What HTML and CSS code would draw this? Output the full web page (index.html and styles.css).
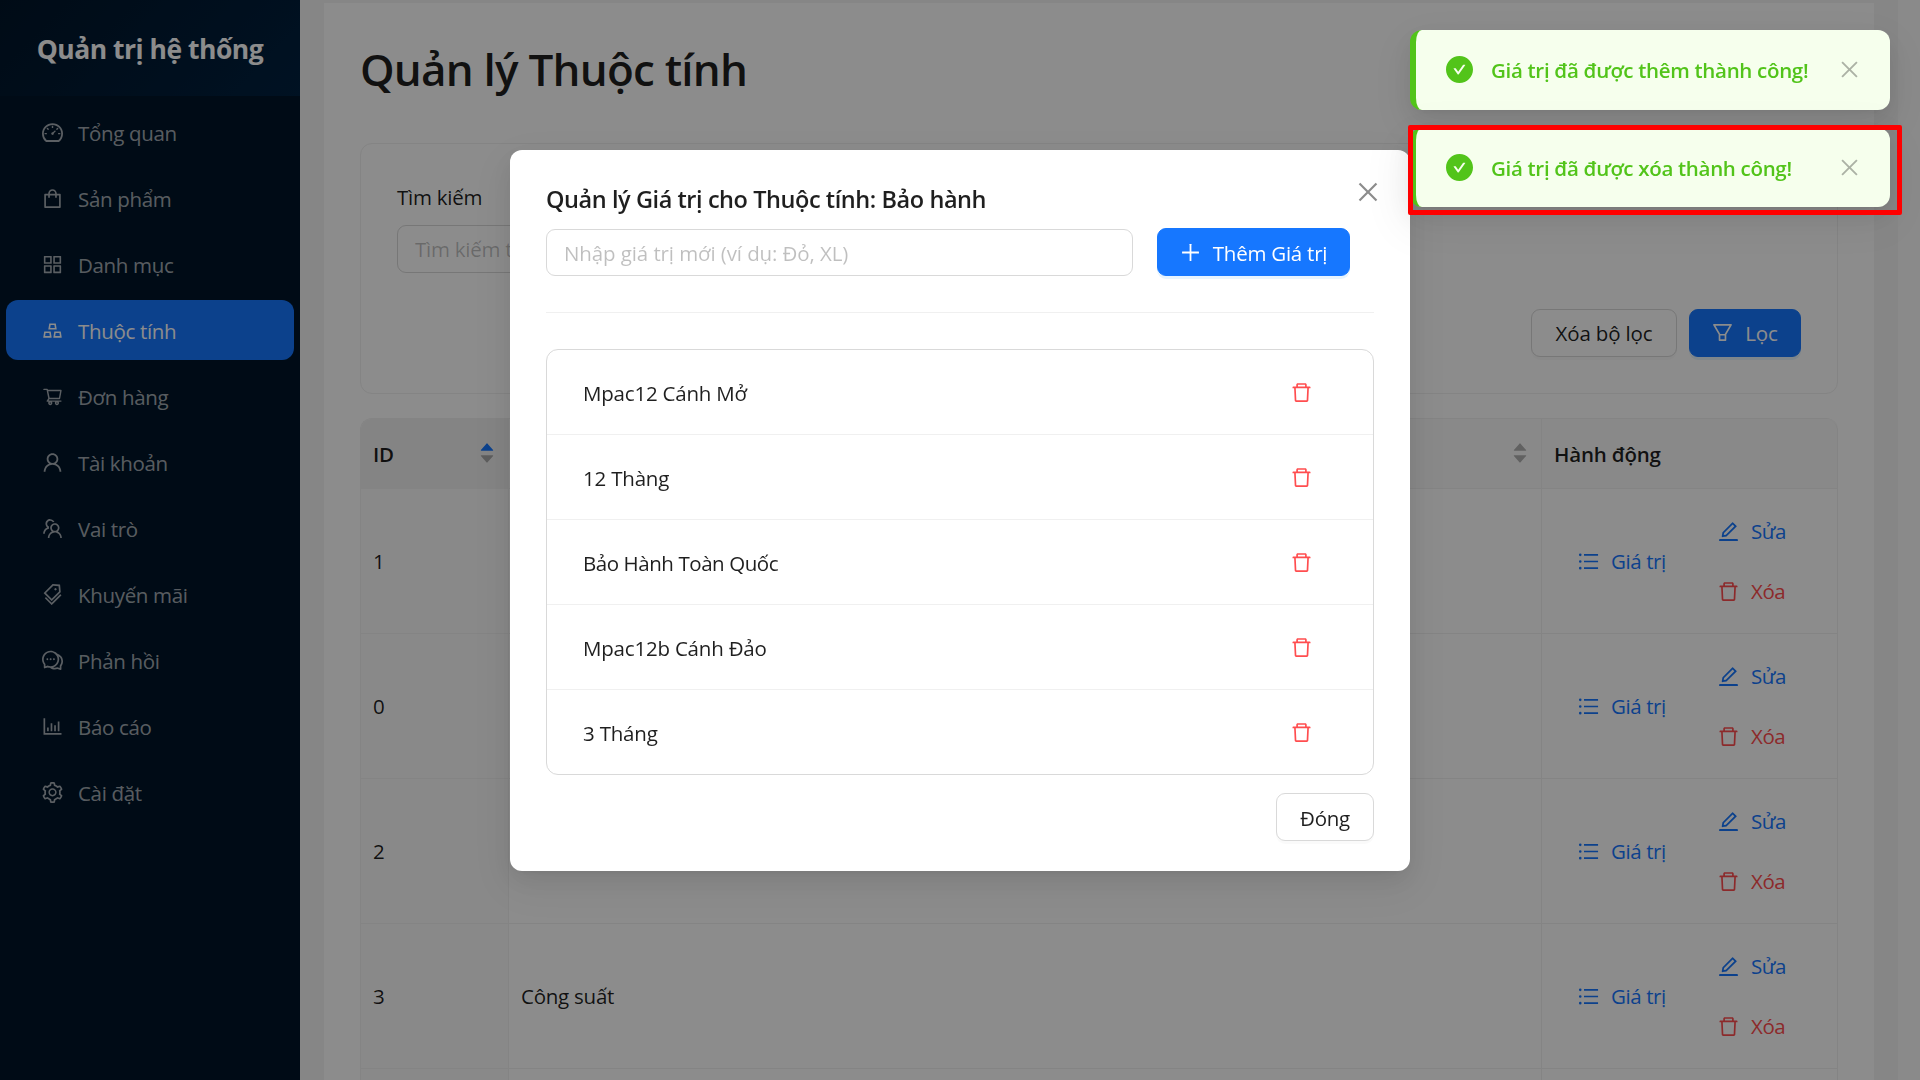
FILE: index.html
```html
<!DOCTYPE html>
<html lang="vi">
<head>
<meta charset="utf-8">
<title>Quản lý Thuộc tính</title>
<link rel="stylesheet" href="styles.css">
</head>
<body>
<svg class="sprite" aria-hidden="true">
  <symbol id="i-dashboard" viewBox="64 64 896 896"><path d="M924.8 385.6a446.7 446.7 0 00-96-142.4 446.7 446.7 0 00-142.4-96C631.1 123.8 572.5 112 512 112s-119.1 11.8-174.4 35.2a446.7 446.7 0 00-142.4 96 446.7 446.7 0 00-96 142.4C75.8 440.9 64 499.5 64 560c0 132.7 58.3 257.7 159.9 343.1l1.7 1.4c5.8 4.8 13.1 7.5 20.6 7.5h531.7c7.5 0 14.8-2.7 20.6-7.5l1.7-1.4C901.7 817.7 960 692.7 960 560c0-60.5-11.9-119.1-35.2-174.4zM761.4 836H262.6A371.12 371.12 0 01140 560c0-99.4 38.7-192.8 109-263 70.3-70.3 163.7-109 263-109 99.4 0 192.8 38.7 263 109 70.3 70.3 109 163.7 109 263 0 105.6-44.5 205.5-122.6 276zM623.5 421.5a8.03 8.03 0 00-11.3 0L527.7 506c-18.7-5-39.4-.2-54.1 14.5a55.95 55.95 0 000 79.2 55.95 55.95 0 0079.2 0 55.87 55.87 0 0014.5-54.1l84.5-84.5c3.1-3.1 3.1-8.2 0-11.3l-28.3-28.3zM490 320h44c4.4 0 8-3.6 8-8v-80c0-4.4-3.6-8-8-8h-44c-4.4 0-8 3.6-8 8v80c0 4.4 3.6 8 8 8zm260 218v44c0 4.4 3.6 8 8 8h80c4.4 0 8-3.6 8-8v-44c0-4.4-3.6-8-8-8h-80c-4.4 0-8 3.6-8 8zm12.7-197.2l-31.1-31.1a8.03 8.03 0 00-11.3 0l-56.6 56.6a8.03 8.03 0 000 11.3l31.1 31.1c3.1 3.1 8.2 3.1 11.3 0l56.6-56.6c3.1-3.1 3.1-8.2 0-11.3zm-458.6-31.1a8.03 8.03 0 00-11.3 0l-31.1 31.1a8.03 8.03 0 000 11.3l56.6 56.6c3.1 3.1 8.2 3.1 11.3 0l31.1-31.1c3.1-3.1 3.1-8.2 0-11.3l-56.6-56.6zM262 530h-80c-4.4 0-8 3.6-8 8v44c0 4.4 3.6 8 8 8h80c4.4 0 8-3.6 8-8v-44c0-4.4-3.6-8-8-8z"/></symbol>
  <symbol id="i-shopping" viewBox="64 64 896 896"><path d="M832 312H696v-16c0-101.6-82.4-184-184-184s-184 82.4-184 184v16H192c-17.7 0-32 14.3-32 32v536c0 17.7 14.3 32 32 32h640c17.7 0 32-14.3 32-32V344c0-17.7-14.3-32-32-32zm-432-16c0-61.9 50.1-112 112-112s112 50.1 112 112v16H400v-16zm392 544H232V384h96v88c0 4.4 3.6 8 8 8h56c4.4 0 8-3.6 8-8v-88h224v88c0 4.4 3.6 8 8 8h56c4.4 0 8-3.6 8-8v-88h96v456z"/></symbol>
  <symbol id="i-appstore" viewBox="64 64 896 896"><path fill-rule="evenodd" d="M160 144h304a16 16 0 0116 16v304a16 16 0 01-16 16H160a16 16 0 01-16-16V160a16 16 0 0116-16zm52 68v200h200V212zM560 144h304a16 16 0 0116 16v304a16 16 0 01-16 16H560a16 16 0 01-16-16V160a16 16 0 0116-16zm52 68v200h200V212zM160 544h304a16 16 0 0116 16v304a16 16 0 01-16 16H160a16 16 0 01-16-16V560a16 16 0 0116-16zm52 68v200h200V612zM560 544h304a16 16 0 0116 16v304a16 16 0 01-16 16H560a16 16 0 01-16-16V560a16 16 0 0116-16zm52 68v200h200V612z"/></symbol>
  <symbol id="i-gold" viewBox="64 64 896 896"><path d="M342 472h342c.4 0 .9 0 1.3-.1 4.4-.7 7.3-4.8 6.6-9.2l-40.2-248c-.6-3.9-4-6.7-7.9-6.7H382.2c-3.9 0-7.3 2.8-7.9 6.7l-40.2 248c-.1.4-.1.9-.1 1.3 0 4.4 3.6 8 8 8zm91.2-196h159.5l20.7 128h-201l20.8-128zm2.5 282.7c-.6-3.9-4-6.7-7.9-6.7H166.2c-3.9 0-7.3 2.8-7.9 6.7l-40.2 248c-.1.4-.1.9-.1 1.3 0 4.4 3.6 8 8 8h342c.4 0 .9 0 1.3-.1 4.4-.7 7.3-4.8 6.6-9.2l-40.2-248zM196.5 748l20.7-128h159.5l20.7 128H196.5zm709.4 58.7l-40.2-248c-.6-3.9-4-6.7-7.9-6.7H596.2c-3.9 0-7.3 2.8-7.9 6.7l-40.2 248c-.1.4-.1.9-.1 1.3 0 4.4 3.6 8 8 8h342c.4 0 .9 0 1.3-.1 4.3-.7 7.3-4.8 6.6-9.2zM626.5 748l20.7-128h159.5l20.7 128H626.5z"/></symbol>
  <symbol id="i-cart" viewBox="0 0 1024 1024"><path d="M922.9 701.9H327.4l29.9-60.9 496.8-.9c16.8 0 31.2-12 34.2-28.6l68.8-385.1c1.8-10.1-.9-20.5-7.5-28.4a34.99 34.99 0 00-26.6-12.5l-632-2.1-5.4-25.4c-3.4-16.2-18-28-34.6-28H96.5a35.3 35.3 0 100 70.6h125.9L246 312.8l58.1 281.3-74.8 122.1a34.96 34.96 0 00-3 36.8c6 11.9 18.1 19.4 31.5 19.4h62.8a102.43 102.43 0 00-20.6 61.7c0 56.6 46 102.6 102.6 102.6s102.6-46 102.6-102.6c0-22.3-7.4-44-20.6-61.7h161.1a102.43 102.43 0 00-20.6 61.7c0 56.6 46 102.6 102.6 102.6s102.6-46 102.6-102.6c0-22.3-7.4-44-20.6-61.7H923c19.4 0 35.3-15.8 35.3-35.3a35.42 35.42 0 00-35.4-35.2zM305.7 253l575.8 1.9-56.4 315.8-452.3.8L305.7 253zm96.9 612.7c-17.4 0-31.6-14.2-31.6-31.6 0-17.4 14.2-31.6 31.6-31.6s31.6 14.2 31.6 31.6a31.6 31.6 0 01-31.6 31.6zm325.1 0c-17.4 0-31.6-14.2-31.6-31.6 0-17.4 14.2-31.6 31.6-31.6s31.6 14.2 31.6 31.6a31.6 31.6 0 01-31.6 31.6z"/></symbol>
  <symbol id="i-user" viewBox="64 64 896 896"><path d="M858.5 763.6a374 374 0 00-80.6-119.5 375.63 375.63 0 00-119.5-80.6c-.4-.2-.8-.3-1.2-.5C719.5 518 760 444.7 760 362c0-137-111-248-248-248S264 225 264 362c0 82.7 40.5 156 102.8 201.1-.4.2-.8.3-1.2.5-44.8 18.9-85 46-119.5 80.6a375.63 375.63 0 00-80.6 119.5A371.7 371.7 0 00136 901.8a8 8 0 008 8.2h60c4.4 0 7.9-3.5 8-7.8 2-77.2 33-149.5 87.8-204.3 56.7-56.7 132-87.9 212.2-87.9s155.5 31.2 212.2 87.9C779 752.7 810 825 812 902.2c.1 4.4 3.6 7.8 8 7.8h60a8 8 0 008-8.2c-1-47.8-10.9-94.3-29.5-138.2zM512 534c-45.9 0-89.1-17.9-121.6-50.4S340 407.9 340 362c0-45.9 17.9-89.1 50.4-121.6S466.1 190 512 190s89.1 17.9 121.6 50.4S684 316.1 684 362c0 45.9-17.9 89.1-50.4 121.6S557.9 534 512 534z"/></symbol>
  <symbol id="i-team" viewBox="64 64 896 896"><path d="M824.2 699.9a301.55 301.55 0 00-86.4-60.4C783.1 602.8 812 546.8 812 484c0-110.8-92.4-201.7-203.2-200-109.1 1.7-197 90.6-197 200 0 62.8 29 118.8 74.2 155.5a300.95 300.95 0 00-86.4 60.4C345 754.6 314 826.8 312 903.8a8 8 0 008 8.2h56c4.3 0 7.9-3.4 8-7.7 1.9-58 25.4-112.3 66.7-153.5A226.62 226.62 0 01612 684c60.9 0 118.2 23.7 161.3 66.8C814.6 792 838 846.3 840 904.3c.1 4.3 3.7 7.7 8 7.7h56a8 8 0 008-8.2c-2-77-33-149.2-87.8-203.9zM612 612c-34.2 0-66.4-13.3-90.5-37.5a126.86 126.86 0 01-37.5-91.8c.3-32.8 13.4-64.5 36.3-88 24-24.6 56.1-38.3 90.4-38.7 33.9-.3 66.8 12.9 91 36.6 24.8 24.3 38.4 56.8 38.4 91.4 0 34.2-13.3 66.3-37.5 90.5A127.3 127.3 0 01612 612zM361.5 510.4c-.9-8.7-1.4-17.5-1.4-26.4 0-15.9 1.5-31.4 4.3-46.5.7-3.6-1.2-7.3-4.5-8.8-13.6-6.1-26.1-14.5-36.9-25.1a127.54 127.54 0 01-38.7-95.4c.9-32.1 13.8-62.6 36.3-85.6 24.7-25.3 57.9-39.1 93.2-38.7 31.9.3 62.7 12.6 86 34.4 7.9 7.4 14.7 15.6 20.4 24.4 2 3.1 5.9 4.4 9.3 3.2 17.6-6.1 36.2-10.4 55.3-12.4 5.6-.6 8.8-6.6 6.3-11.6-32.5-64.3-98.9-108.7-175.7-109.9-110.9-1.7-203.3 89.2-203.3 199.9 0 62.8 28.9 118.8 74.2 155.5-31.8 14.7-61.1 35-86.5 60.4-54.8 54.7-85.8 126.9-87.8 204a8 8 0 008 8.2h56.1c4.3 0 7.9-3.4 8-7.7 1.9-58 25.4-112.3 66.7-153.5 29.4-29.4 65.4-49.8 104.7-59.7 3.9-1 6.5-4.7 6-8.7z"/></symbol>
  <symbol id="i-tags" viewBox="64 64 896 896"><path d="M483.2 790.3L861.4 412c1.7-1.7 2.5-4 2.3-6.3l-25.5-301.4c-.7-7.8-6.8-13.9-14.6-14.6L522.2 64.3c-2.3-.2-4.7.6-6.3 2.3L137.7 444.8a8.03 8.03 0 000 11.3l334.2 334.2c3.1 3.2 8.2 3.2 11.3 0zm62.6-651.7l224.6 19 19 224.6L477.5 694 233.9 450.5l311.9-311.9zm60.16 186.23a48 48 0 1067.88-67.89 48 48 0 10-67.88 67.89zM889.7 539.8l-39.6-39.5a8.03 8.03 0 00-11.3 0l-362 361.3-237.6-237a8.03 8.03 0 00-11.3 0l-39.6 39.5a8.03 8.03 0 000 11.3l243.2 242.8 39.6 39.5c3.1 3.1 8.2 3.1 11.3 0l407.3-406.6c3.1-3.1 3.1-8.2 0-11.3z"/></symbol>
  <symbol id="i-comment" viewBox="64 64 896 896"><path d="M573 421c-23.1 0-41 17.9-41 40s17.9 40 41 40c21.1 0 39-17.9 39-40s-17.9-40-39-40zm-280 0c-23.1 0-41 17.9-41 40s17.9 40 41 40c21.1 0 39-17.9 39-40s-17.9-40-39-40z"/><path d="M894 345a343.92 343.92 0 00-189-130v.1c-17.1-19-36.4-36.5-58-52.1-163.7-119-393.5-82.7-513 81-96.3 133-92.2 311.9 6 439l.8 132.6c0 3.2.5 6.4 1.5 9.4a31.95 31.95 0 0040.1 20.9L309 806c33.5 11.9 68.1 18.7 102.5 20.6l-.5.4c89.1 64.9 205.9 84.4 313 49l127.1 41.4c3.2 1 6.5 1.6 9.9 1.6 17.7 0 32-14.3 32-32V753c88.1-119.6 90.4-284.9 1-408zM323 735l-12-5-99 31-1-104-8-9c-84.6-103.2-90.2-251.9-11-361 96.4-132.2 281.2-161.4 413-66 132.2 96.1 161.5 280.6 66 412-80.1 109.9-223.5 150.5-348 102zm505-17l-8 10 1 104-98-33-12 5c-56 20.8-115.7 22.5-171 7l-.2-.1A367.31 367.31 0 00729 676c76.4-105.3 88.8-237.6 44.4-350.4l.6.4c23 16.5 44.1 37.1 62 62 72.6 99.6 68.5 235.2-8 330z"/><path d="M433 421c-23.1 0-41 17.9-41 40s17.9 40 41 40c21.1 0 39-17.9 39-40s-17.9-40-39-40z"/></symbol>
  <symbol id="i-chart" viewBox="64 64 896 896"><path d="M888 792H200V168c0-4.4-3.6-8-8-8h-56c-4.4 0-8 3.6-8 8v688c0 4.4 3.6 8 8 8h752c4.4 0 8-3.6 8-8v-56c0-4.4-3.6-8-8-8zm-600-80h56c4.4 0 8-3.6 8-8V560c0-4.4-3.6-8-8-8h-56c-4.4 0-8 3.6-8 8v144c0 4.4 3.6 8 8 8zm152 0h56c4.4 0 8-3.6 8-8V384c0-4.4-3.6-8-8-8h-56c-4.4 0-8 3.6-8 8v320c0 4.4 3.6 8 8 8zm152 0h56c4.4 0 8-3.6 8-8V462c0-4.4-3.6-8-8-8h-56c-4.4 0-8 3.6-8 8v242c0 4.4 3.6 8 8 8zm152 0h56c4.4 0 8-3.6 8-8V304c0-4.4-3.6-8-8-8h-56c-4.4 0-8 3.6-8 8v400c0 4.4 3.6 8 8 8z"/></symbol>
  <symbol id="i-setting" viewBox="64 64 896 896"><path d="M924.8 625.7l-65.5-56c3.1-19 4.7-38.4 4.7-57.8s-1.6-38.8-4.7-57.8l65.5-56a32.03 32.03 0 009.3-35.2l-.9-2.6a443.74 443.74 0 00-79.7-137.9l-1.8-2.1a32.12 32.12 0 00-35.1-9.5l-81.3 28.9c-30-24.6-63.5-44-99.7-57.6l-15.7-85a32.05 32.05 0 00-25.8-25.7l-2.7-.5c-52.1-9.4-106.9-9.4-159 0l-2.7.5a32.05 32.05 0 00-25.8 25.7l-15.8 85.4a351.86 351.86 0 00-99 57.4l-81.9-29.1a32 32 0 00-35.1 9.5l-1.8 2.1a446.02 446.02 0 00-79.7 137.9l-.9 2.6c-4.5 12.5-.8 26.5 9.3 35.2l66.3 56.6c-3.1 18.8-4.6 38-4.6 57.1 0 19.2 1.5 38.4 4.6 57.1L99 625.5a32.03 32.03 0 00-9.3 35.2l.9 2.6c18.1 50.4 44.9 96.9 79.7 137.9l1.8 2.1a32.12 32.12 0 0035.1 9.5l81.9-29.1c29.8 24.5 63.1 43.9 99 57.4l15.8 85.4a32.05 32.05 0 0025.8 25.7l2.7.5a449.4 449.4 0 00159 0l2.7-.5a32.05 32.05 0 0025.8-25.7l15.7-85a350 350 0 0099.7-57.6l81.3 28.9a32 32 0 0035.1-9.5l1.8-2.1c34.8-41.1 61.6-87.5 79.7-137.9l.9-2.6c4.5-12.3.8-26.3-9.3-35zM788.3 465.9c2.5 15.1 3.8 30.6 3.8 46.1s-1.3 31-3.8 46.1l-6.6 40.1 74.7 63.9a370.03 370.03 0 01-42.6 73.6L721 702.8l-31.4 25.8c-23.9 19.6-50.5 35-79.3 45.8l-38.1 14.3-17.9 97a377.5 377.5 0 01-85 0l-17.9-97.2-37.8-14.5c-28.5-10.8-55-26.2-78.7-45.7l-31.4-25.9-93.4 33.2c-17-22.9-31.2-47.6-42.6-73.6l75.5-64.5-6.5-40c-2.4-14.9-3.7-30.3-3.7-45.5 0-15.3 1.2-30.6 3.7-45.5l6.5-40-75.5-64.5c11.3-26.1 25.6-50.7 42.6-73.6l93.4 33.2 31.4-25.9c23.7-19.5 50.2-34.9 78.7-45.7l37.9-14.3 17.9-97.2c28.1-3.2 56.8-3.2 85 0l17.9 97 38.1 14.3c28.7 10.8 55.4 26.2 79.3 45.8l31.4 25.8 92.8-32.9c17 22.9 31.2 47.6 42.6 73.6L781.8 426l6.5 39.9zM512 326c-97.2 0-176 78.8-176 176s78.8 176 176 176 176-78.8 176-176-78.8-176-176-176zm79.2 255.2A111.6 111.6 0 01512 614c-29.9 0-58-11.7-79.2-32.8A111.6 111.6 0 01400 502c0-29.9 11.7-58 32.8-79.2C454 401.6 482.1 390 512 390c29.9 0 58 11.6 79.2 32.8A111.6 111.6 0 01624 502c0 29.9-11.7 58-32.8 79.2z"/></symbol>
  <symbol id="i-delete" viewBox="64 64 896 896"><path d="M360 184h-8c4.4 0 8-3.6 8-8v8h304v-8c0 4.4 3.6 8 8 8h-8v72h72v-80c0-35.3-28.7-64-64-64H352c-35.3 0-64 28.7-64 64v80h72v-72zm504 72H160c-17.7 0-32 14.3-32 32v32c0 4.4 3.6 8 8 8h60.4l24.7 523c1.6 34.1 29.8 61 63.9 61h454c34.2 0 62.3-26.8 63.9-61l24.7-523H888c4.4 0 8-3.6 8-8v-32c0-17.7-14.3-32-32-32zM731.3 840H292.7l-24.2-512h487l-24.2 512z"/></symbol>
  <symbol id="i-edit" viewBox="64 64 896 896"><path d="M257.7 752c2 0 4-.2 6-.5L431.9 722c2-.4 3.9-1.3 5.3-2.8l423.9-423.9a9.96 9.96 0 000-14.1L694.9 114.9c-1.9-1.9-4.4-2.9-7.1-2.9s-5.2 1-7.1 2.9L256.8 538.8c-1.5 1.5-2.4 3.3-2.8 5.3l-29.5 168.2a33.5 33.5 0 009.4 29.8c6.6 6.4 14.9 9.9 23.8 9.9zm67.4-174.4L687.8 215l73.3 73.3-362.7 362.6-88.9 15.7 15.6-89zM880 836H144c-17.7 0-32 14.3-32 32v36c0 4.4 3.6 8 8 8h784c4.4 0 8-3.6 8-8v-36c0-17.7-14.3-32-32-32z"/></symbol>
  <symbol id="i-list" viewBox="64 64 896 896"><path d="M912 192H328c-4.4 0-8 3.6-8 8v56c0 4.4 3.6 8 8 8h584c4.4 0 8-3.6 8-8v-56c0-4.4-3.6-8-8-8zm0 284H328c-4.4 0-8 3.6-8 8v56c0 4.4 3.6 8 8 8h584c4.4 0 8-3.6 8-8v-56c0-4.4-3.6-8-8-8zm0 284H328c-4.4 0-8 3.6-8 8v56c0 4.4 3.6 8 8 8h584c4.4 0 8-3.6 8-8v-56c0-4.4-3.6-8-8-8zM104 228a56 56 0 10112 0 56 56 0 10-112 0zm0 284a56 56 0 10112 0 56 56 0 10-112 0zm0 284a56 56 0 10112 0 56 56 0 10-112 0z"/></symbol>
  <symbol id="i-filter" viewBox="64 64 896 896"><path d="M880.1 154H143.9c-24.5 0-39.8 26.7-27.5 48L349 597.4V838c0 17.7 14.2 32 31.8 32h262.4c17.6 0 31.8-14.3 31.8-32V597.4L907.7 202c12.2-21.3-3.1-48-27.6-48zM603.4 798H420.6V642h182.9v156zm9.6-236.6l-9.5 16.6h-183l-9.5-16.6L212.7 226h598.6L613 561.4z"/></symbol>
  <symbol id="i-plus" viewBox="64 64 896 896"><path d="M482 152h60q8 0 8 8v704q0 8-8 8h-60q-8 0-8-8V160q0-8 8-8z"/><path d="M192 474h672q8 0 8 8v60q0 8-8 8H160q-8 0-8-8v-60q0-8 8-8z"/></symbol>
  <symbol id="i-close" viewBox="64 64 896 896"><path d="M799.9 166.3l57.9 57.9L569.9 512l287.9 287.8-57.9 57.9L512 569.9 224.2 857.7l-57.9-57.9L454.1 512 166.3 224.2l57.9-57.9L512 454.1z"/></symbol>
  <symbol id="i-check" viewBox="64 64 896 896"><path d="M512 64C264.6 64 64 264.6 64 512s200.6 448 448 448 448-200.6 448-448S759.4 64 512 64zm193.5 301.7l-210.6 292a31.8 31.8 0 01-51.7 0L318.5 484.9c-3.8-5.3 0-12.7 6.5-12.7h46.9c10.2 0 19.9 4.9 25.9 13.3l71.2 98.8 157.2-218c6-8.3 15.6-13.3 25.9-13.3H699c6.5 0 10.3 7.4 6.5 12.7z"/></symbol>
  <symbol id="i-up" viewBox="0 0 1024 1024"><path d="M858.9 689L530.5 308.2c-9.4-10.9-27.5-10.9-37 0L165.1 689c-12.2 14.2-1.2 35 18.5 35h656.8c19.7 0 30.7-20.8 18.5-35z"/></symbol>
  <symbol id="i-down" viewBox="0 0 1024 1024"><path d="M840.4 300H183.6c-19.7 0-30.7 20.8-18.5 35l328.4 380.8c9.4 10.9 27.4 10.9 37 0L858.9 335c12.2-14.2 1.2-35-18.5-35z"/></symbol>
</svg>

<div class="layout">
  <aside class="sidebar">
    <div class="brand">Quản trị hệ thống</div>
    <nav class="menu">
      <a class="item"><svg class="icon"><use href="#i-dashboard"/></svg><span>Tổng quan</span></a>
      <a class="item"><svg class="icon"><use href="#i-shopping"/></svg><span>Sản phẩm</span></a>
      <a class="item"><svg class="icon"><use href="#i-appstore"/></svg><span>Danh mục</span></a>
      <a class="item active"><svg class="icon"><use href="#i-gold"/></svg><span>Thuộc tính</span></a>
      <a class="item"><svg class="icon"><use href="#i-cart"/></svg><span>Đơn hàng</span></a>
      <a class="item"><svg class="icon"><use href="#i-user"/></svg><span>Tài khoản</span></a>
      <a class="item"><svg class="icon"><use href="#i-team"/></svg><span>Vai trò</span></a>
      <a class="item"><svg class="icon"><use href="#i-tags"/></svg><span>Khuyến mãi</span></a>
      <a class="item"><svg class="icon"><use href="#i-comment"/></svg><span>Phản hồi</span></a>
      <a class="item"><svg class="icon"><use href="#i-chart"/></svg><span>Báo cáo</span></a>
      <a class="item"><svg class="icon"><use href="#i-setting"/></svg><span>Cài đặt</span></a>
    </nav>
  </aside>

  <main class="page">
    <div class="content">
      <h1 class="page-title">Quản lý Thuộc tính</h1>

      <section class="filter">
        <label class="filter-label">Tìm kiếm</label>
        <div class="input filter-input">Tìm kiếm t</div>
        <div class="filter-actions">
          <button class="btn">Xóa bộ lọc</button>
          <button class="btn primary btn-filter"><svg class="icon"><use href="#i-filter"/></svg><span>Lọc</span></button>
        </div>
      </section>

      <div class="table">
        <div class="tr head">
          <div class="td sorted"><span>ID</span><span class="sorter"><svg class="on"><use href="#i-up"/></svg><svg><use href="#i-down"/></svg></span></div>
          <div class="td"><span></span><span class="sorter"><svg><use href="#i-up"/></svg><svg><use href="#i-down"/></svg></span></div>
          <div class="td"><span>Hành động</span></div>
        </div>
        <div class="tr">
          <div class="td sorted">1</div><div class="td"></div>
          <div class="td actions"><a class="link"><svg class="icon"><use href="#i-list"/></svg><span>Giá trị</span></a><div class="stack"><a class="link"><svg class="icon"><use href="#i-edit"/></svg><span>Sửa</span></a><a class="link danger"><svg class="icon"><use href="#i-delete"/></svg><span>Xóa</span></a></div></div>
        </div>
        <div class="tr">
          <div class="td sorted">0</div><div class="td"></div>
          <div class="td actions"><a class="link"><svg class="icon"><use href="#i-list"/></svg><span>Giá trị</span></a><div class="stack"><a class="link"><svg class="icon"><use href="#i-edit"/></svg><span>Sửa</span></a><a class="link danger"><svg class="icon"><use href="#i-delete"/></svg><span>Xóa</span></a></div></div>
        </div>
        <div class="tr">
          <div class="td sorted">2</div><div class="td"></div>
          <div class="td actions"><a class="link"><svg class="icon"><use href="#i-list"/></svg><span>Giá trị</span></a><div class="stack"><a class="link"><svg class="icon"><use href="#i-edit"/></svg><span>Sửa</span></a><a class="link danger"><svg class="icon"><use href="#i-delete"/></svg><span>Xóa</span></a></div></div>
        </div>
        <div class="tr">
          <div class="td sorted">3</div><div class="td">Công suất</div>
          <div class="td actions"><a class="link"><svg class="icon"><use href="#i-list"/></svg><span>Giá trị</span></a><div class="stack"><a class="link"><svg class="icon"><use href="#i-edit"/></svg><span>Sửa</span></a><a class="link danger"><svg class="icon"><use href="#i-delete"/></svg><span>Xóa</span></a></div></div>
        </div>
        <div class="tr">
          <div class="td sorted"></div><div class="td"></div><div class="td"></div>
        </div>
      </div>
    </div>
  </main>
  <div class="scroll-track"></div>
</div>

<div class="mask">
  <div class="modal">
    <svg class="modal-close"><use href="#i-close"/></svg>
    <h2 class="modal-title">Quản lý Giá trị cho Thuộc tính: Bảo hành</h2>
    <div class="add-row">
      <div class="input add-input">Nhập giá trị mới (ví dụ: Đỏ, XL)</div>
      <button class="btn primary btn-add"><svg class="icon"><use href="#i-plus"/></svg><span>Thêm Giá trị</span></button>
    </div>
    <hr class="divider">
    <ul class="values">
      <li><span>Mpac12 Cánh Mở</span><svg class="icon"><use href="#i-delete"/></svg></li>
      <li><span>12 Thàng</span><svg class="icon"><use href="#i-delete"/></svg></li>
      <li><span class="tight">Bảo Hành Toàn Quốc</span><svg class="icon"><use href="#i-delete"/></svg></li>
      <li><span>Mpac12b Cánh Đảo</span><svg class="icon"><use href="#i-delete"/></svg></li>
      <li><span>3 Tháng</span><svg class="icon"><use href="#i-delete"/></svg></li>
    </ul>
    <div class="modal-footer"><button class="btn btn-done">Đóng</button></div>
  </div>
</div>

<div class="toasts">
  <div class="toast"><svg class="toast-icon"><use href="#i-check"/></svg><span>Giá trị đã được thêm thành công!</span><svg class="toast-close"><use href="#i-close"/></svg></div>
  <div class="toast second"><svg class="toast-icon"><use href="#i-check"/></svg><span>Giá trị đã được xóa thành công!</span><svg class="toast-close"><use href="#i-close"/></svg></div>
</div>
<div class="highlight"></div>
</body>
</html>
```
FILE: styles.css
```css
* { box-sizing: border-box; }

body {
  margin: 0;
  height: 1080px;
  overflow: hidden;
  font: 400 20.5px/33px "Open Sans", "Noto Sans", sans-serif;
  letter-spacing: -0.24px;
  color: rgba(0, 0, 0, 0.88);
}

.sprite { display: none; }
svg { fill: currentColor; flex: none; display: block; }
.icon { width: 21px; height: 21px; }

.layout { display: flex; height: 1080px; overflow: hidden; background: #f5f5f5; }

/* Sidebar */
.sidebar { width: 300px; flex: none; background: #001529; }
.brand {
  height: 96px;
  display: flex;
  align-items: center;
  justify-content: center;
  padding-top: 3px;
  background: linear-gradient(135deg, #001529 0%, #002140 100%);
  color: #fff;
  font-size: 26.5px;
  font-weight: 700;
  letter-spacing: -0.5px;
}
.menu { display: flex; flex-direction: column; gap: 6px; padding: 6px; }
.item {
  height: 60px;
  display: flex;
  align-items: center;
  gap: 15px;
  padding-left: 36px;
  border-radius: 12px;
  color: rgba(255, 255, 255, 0.65);
  letter-spacing: -0.33px;
}
.item span { padding-top: 2px; }
.item.active { background: #1677ff; color: #fff; }

/* Page */
.page { flex: 1; padding: 3px 24px 0; }
.content { background: #fff; height: 1100px; padding: 36px; }
.scroll-track { width: 22px; flex: none; background: #fbfbfb; }
.page-title {
  margin: 0 0 36px;
  height: 68px;
  font-size: 44px;
  line-height: 60px;
  font-weight: 600;
  letter-spacing: -0.78px;
}

.btn {
  height: 48px;
  display: flex;
  align-items: center;
  justify-content: center;
  gap: 12px;
  padding: 2px 0 0;
  border: 1px solid #d9d9d9;
  border-radius: 9px;
  background: #fff;
  color: rgba(0, 0, 0, 0.88);
  font: inherit;
  letter-spacing: -0.24px;
  box-shadow: 0 3px 0 rgba(0, 0, 0, 0.02);
}
.btn.primary {
  border-color: #1677ff;
  background: #1677ff;
  color: #fff;
  box-shadow: 0 3px 0 rgba(5, 145, 255, 0.1);
}
.btn .icon { margin-top: -2px; }

.input {
  height: 48px;
  padding: 7px 17px;
  border: 1px solid #d9d9d9;
  border-radius: 9px;
  color: rgba(0, 0, 0, 0.25);
  white-space: nowrap;
}

.filter {
  height: 251px;
  padding: 36px;
  border: 1px solid #f0f0f0;
  border-radius: 12px;
}
.filter-label { display: block; height: 45px; padding-top: 1px; }
.filter-input { width: 440px; }
.filter-actions { display: flex; justify-content: flex-end; gap: 12px; margin-top: 36px; }
.filter-actions .btn { width: 146px; padding-top: 1px; letter-spacing: -0.15px; }
.filter-actions .btn-filter { width: 112px; }

/* Table */
.table {
  margin-top: 24px;
  border: 1px solid #f0f0f0;
  border-width: 1px 0 0 1px;
  border-radius: 12px 12px 0 0;
  overflow: hidden;
}
.tr { display: grid; grid-template-columns: 148px 1033px 296px; height: 145px; }
.head { height: 70px; background: #fafafa; font-weight: 600; letter-spacing: -0.2px; }
.td {
  display: flex;
  align-items: center;
  padding: 1px 12px 0;
  border-right: 1px solid #f0f0f0;
  border-bottom: 1px solid #f0f0f0;
}
.head .td { justify-content: space-between; }
.head .td:last-child { border-top-right-radius: 12px; }
.td.sorted { background: #fafafa; }
.head .sorted { background: #f0f0f0; }
.sorter { color: rgba(0, 0, 0, 0.29); margin-bottom: 2px; }
.sorter svg { width: 18px; height: 18px; }
.sorter svg + svg { margin-top: -6px; }
.sorter .on { color: #1677ff; }

.actions { padding: 0 12px; }
.stack { margin-left: 51px; }
.link {
  height: 60px;
  display: flex;
  align-items: center;
  gap: 12px;
  color: #1677ff;
}
.stack .link { letter-spacing: -0.45px; }
.actions > .link { padding-left: 24px; width: 113px; letter-spacing: -0.4px; }
.link span { padding-top: 1px; }
.link.danger { color: #ff4d4f; }

/* Modal */
.mask {
  position: fixed;
  inset: 0;
  display: flex;
  justify-content: center;
  align-items: flex-start;
  padding-top: 150px;
  background: rgba(0, 0, 0, 0.45);
}
.modal {
  position: relative;
  width: 900px;
  height: 721px;
  padding: 30px 36px;
  border-radius: 12px;
  background: #fff;
  box-shadow: 0 9px 24px rgba(0, 0, 0, 0.08), 0 4px 9px -6px rgba(0, 0, 0, 0.12), 0 14px 42px 12px rgba(0, 0, 0, 0.05);
}
.modal-close {
  position: absolute;
  top: 30px;
  right: 30px;
  width: 24px;
  height: 24px;
  color: rgba(0, 0, 0, 0.45);
}
.modal-title {
  margin: 0 0 12px;
  padding-top: 1px;
  height: 36px;
  font-size: 23.5px;
  line-height: 36px;
  font-weight: 600;
  letter-spacing: -0.43px;
}
.add-row { display: flex; gap: 24px; }
.add-input { width: 587px; height: 47px; margin-top: 1px; letter-spacing: -0.1px; }
.btn-add { width: 193px; }
.divider { margin: 36px 0; border: 0; height: 1px; background: #f0f0f0; }
.values {
  margin: 0;
  padding: 0;
  list-style: none;
  border: 1px solid #d9d9d9;
  border-radius: 12px;
  letter-spacing: -0.2px;
}
.values li {
  height: 85px;
  display: flex;
  align-items: center;
  justify-content: space-between;
  padding: 2px 61px 0 36px;
  border-bottom: 1px solid #f0f0f0;
}
.values li:last-child { border-bottom: 0; height: 84px; }
.values .tight { letter-spacing: -0.43px; }
.values .icon { color: #ff4d4f; margin-bottom: 2px; }
.modal-footer { display: flex; justify-content: flex-end; margin-top: 18px; }
.btn-done { width: 98px; }

/* Notifications */
.toasts { position: fixed; top: 30px; right: 30px; display: flex; flex-direction: column; gap: 18px; }
.toast {
  width: 480px;
  height: 80px;
  display: flex;
  align-items: center;
  padding: 0 30px 1px;
  border-left: 6px solid #52c41a;
  border-radius: 12px;
  background: #f6ffed;
  color: #52c41a;
  font-weight: 600;
  letter-spacing: -0.31px;
  box-shadow: 0 9px 24px rgba(0, 0, 0, 0.08), 0 4px 9px -6px rgba(0, 0, 0, 0.12), 0 14px 42px 12px rgba(0, 0, 0, 0.05);
}
.toast.second { height: 79px; padding-bottom: 0; }
.toast span { flex: 1; padding-top: 1px; margin-left: 18px; }
.toast-icon { width: 27px; height: 27px; }
.toast-close { width: 21px; height: 21px; color: rgba(0, 0, 0, 0.3); }

.highlight {
  position: fixed;
  top: 125px;
  left: 1408px;
  width: 494px;
  height: 90px;
  border: 5px solid #f00;
  border-radius: 2px;
}
```
